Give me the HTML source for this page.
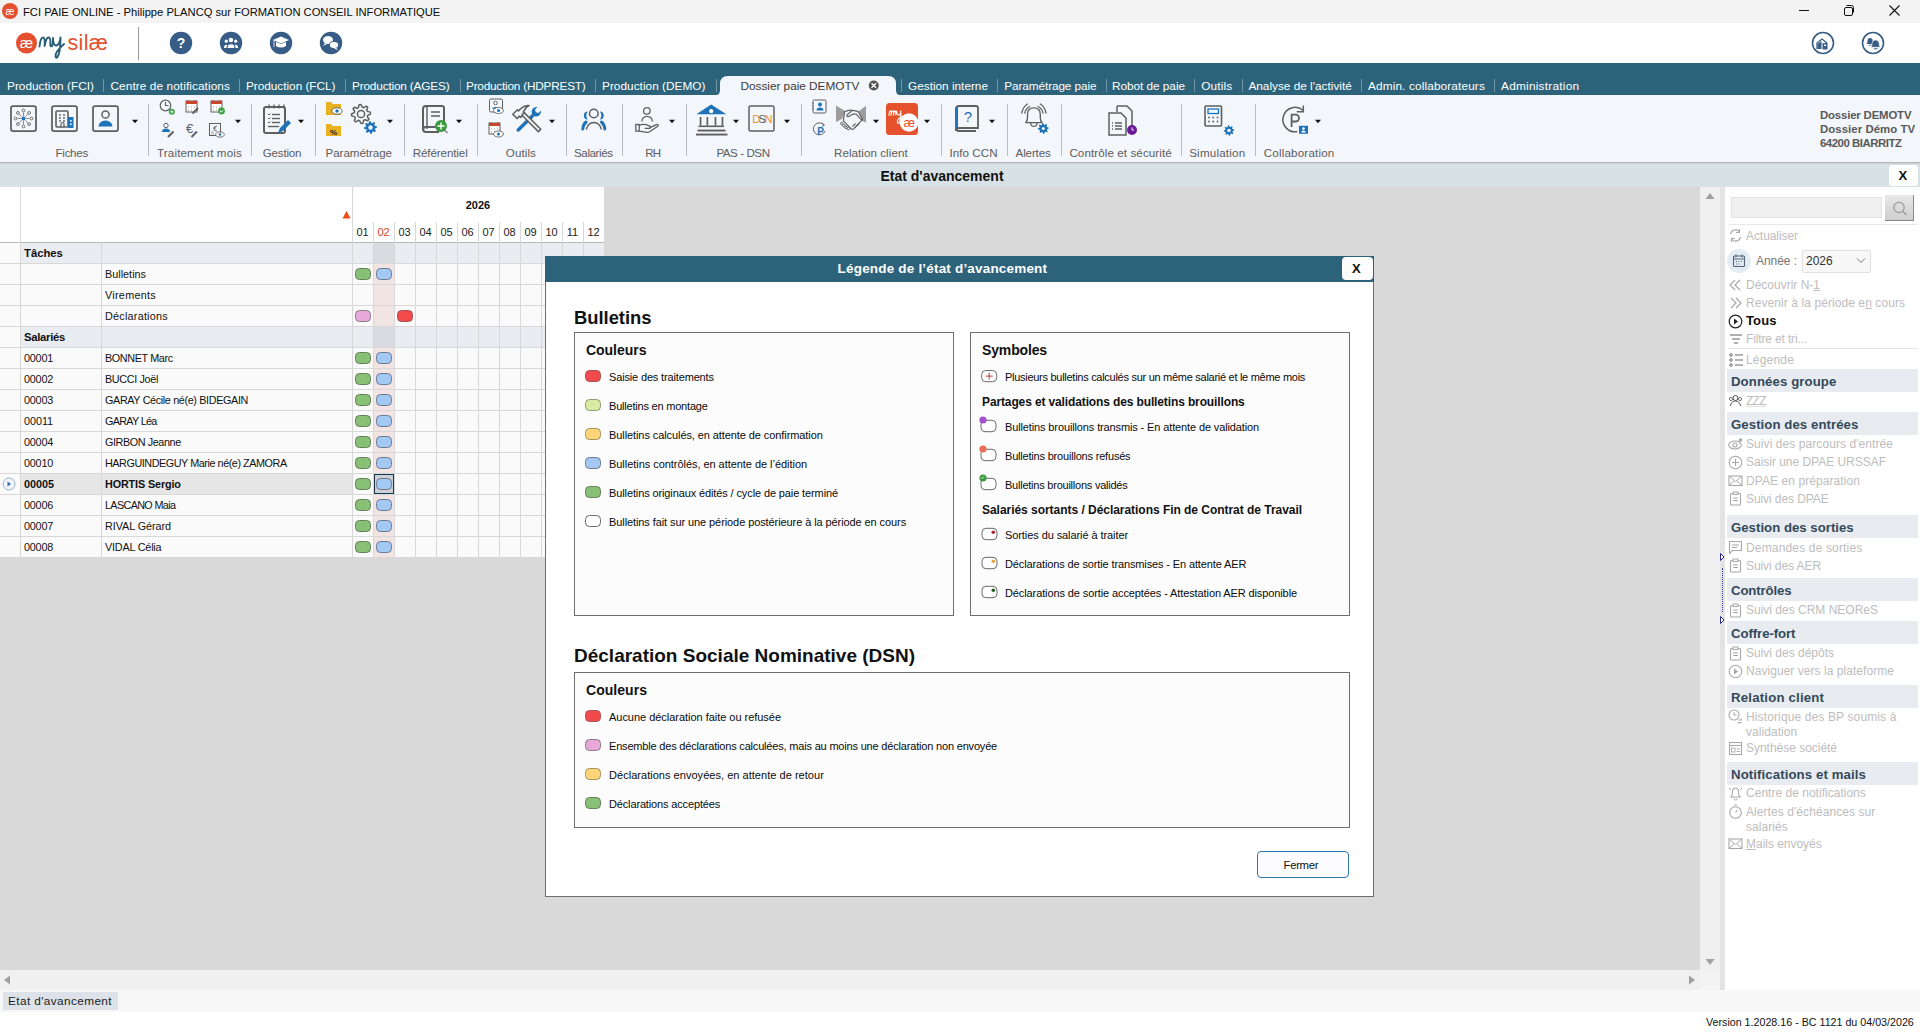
<!DOCTYPE html><html><head><meta charset="utf-8"><title>FCI PAIE ONLINE</title><style>
*{margin:0;padding:0;box-sizing:border-box}
html,body{width:1920px;height:1032px;overflow:hidden;background:#fff;font-family:"Liberation Sans",sans-serif}
.t{position:absolute;white-space:nowrap}
.r{position:absolute}
svg{position:absolute;overflow:visible}
</style></head><body>
<div class="r" style="left:0px;top:0px;width:1920px;height:23px;background:#f3f3f3"></div>
<svg style="left:0;top:0" width="24" height="23"><circle cx="10" cy="11" r="8" fill="#e4502d"/><text x="10" y="14.5" font-size="10" fill="#fff" text-anchor="middle" font-family="Liberation Sans">æ</text></svg>
<div class="t " style="left:23px;top:3.5px;height:16px;line-height:16px;font-size:11.2px;color:#0a0a0a;">FCI PAIE ONLINE - Philippe PLANCQ sur FORMATION CONSEIL INFORMATIQUE</div>
<svg style="left:1790px;top:0" width="130" height="23"><line x1="9" y1="10.5" x2="19" y2="10.5" stroke="#111" stroke-width="1"/><rect x="54.5" y="7.5" width="8" height="8" rx="1.5" fill="none" stroke="#111" stroke-width="1"/><path d="M56.5 5.5 h5 a2 2 0 0 1 2 2 v5" fill="none" stroke="#111" stroke-width="1"/><path d="M99.5 5.5 l10 10 M109.5 5.5 l-10 10" stroke="#111" stroke-width="1.1"/></svg>
<svg style="left:0;top:23px" width="140" height="40"><circle cx="26.5" cy="20" r="10.5" fill="#e4502d"/><text x="26.5" y="25" font-size="15" fill="#fff" text-anchor="middle" font-family="Liberation Sans">æ</text><path d="M39.5 23.5 Q40.5 14 43.2 14.5 Q45.2 15 44.6 23 Q46.2 14 48.8 14.5 Q50.8 15 50.3 22 Q50.5 24 52 23 Q53 21 53 15 Q53 23 56.5 22.5 Q59.5 22 60.5 14.5 Q60.5 27 58.5 32 Q56.5 36.5 55.5 33.5 Q55 29 64 21" fill="none" stroke="#2b5d74" stroke-width="1.9" stroke-linecap="round" stroke-linejoin="round"/><text x="67.5" y="26.5" font-size="21.5" fill="#e4502d" font-family="Liberation Sans" letter-spacing="0.3">silæ</text></svg>
<div class="r" style="left:138px;top:27px;width:1px;height:33px;background:#9a9a9a"></div>
<svg style="left:160px;top:23px" width="190" height="40"><circle cx="21" cy="20" r="11.2" fill="#375d86"/><circle cx="71" cy="20" r="11.2" fill="#375d86"/><circle cx="121" cy="20" r="11.2" fill="#375d86"/><circle cx="171" cy="20" r="11.2" fill="#375d86"/><text x="21" y="25" font-size="14" font-weight="bold" fill="#fff" text-anchor="middle" font-family="Liberation Sans">?</text><g fill="#fff"><circle cx="71" cy="17" r="2.2"/><circle cx="66.3" cy="18.2" r="1.6"/><circle cx="75.7" cy="18.2" r="1.6"/><path d="M67.6 25 v-0.5 a3.4 3.2 0 0 1 6.8 0 v0.5z"/><path d="M64 25 v-1 a2.5 2.3 0 0 1 3.3-2.1 q-0.9 1.2-0.9 3.1z M78 25 v-1 a2.5 2.3 0 0 0 -3.3-2.1 q0.9 1.2 0.9 3.1z"/></g><g fill="#fff"><path d="M113 17 l8-3.5 l8 3.5 l-8 3.5z"/><path d="M116 19 v4 q5 3 10 0 v-4 l-5 2z"/><rect x="113.5" y="17" width="1" height="7" opacity=".8"/></g><g fill="#fff"><ellipse cx="168" cy="17" rx="5" ry="4"/><path d="M165 20 l-2 3 l4-2z"/><ellipse cx="174" cy="22" rx="4.5" ry="3.5" fill="#fff" stroke="#375d86" stroke-width="1"/><path d="M176 24.5 l2 2.5 l-4-1.5z"/></g></svg>
<svg style="left:1800px;top:23px" width="100" height="40"><circle cx="23" cy="20" r="10.5" fill="none" stroke="#375d86" stroke-width="1.6"/><path d="M17 26 v-6 l5-4 l5 4" fill="none" stroke="#375d86" stroke-width="1.3"/><path d="M17.5 21 l4-3 v8 h-4z" fill="#375d86"/><rect x="22.5" y="20" width="5" height="6.5" fill="#375d86"/><rect x="24" y="21.5" width="2" height="1.5" fill="#fff"/><circle cx="73" cy="20" r="10.5" fill="none" stroke="#375d86" stroke-width="1.6"/><path d="M66.5 21 q1-0.6 1-3 q0-3 2.6-3 q2.6 0 2.6 3 q0 2.4 1 3z" fill="#375d86"/><path d="M68.5 22.2 h3" stroke="#375d86" stroke-width="0.8"/><path d="M70.8 24.3 q1.2-0.8 1.2-3.5 q0-3.8 3.6-3.8 q3.6 0 3.6 3.8 q0 2.7 1.2 3.5z" fill="#375d86" stroke="#fff" stroke-width="0.6"/><path d="M73.8 25.8 h3.8" stroke="#375d86" stroke-width="1"/></svg>
<div class="r" style="left:0px;top:63px;width:1920px;height:32px;background:#2d637a"></div>
<svg style="left:716px;top:63px" width="184" height="32"><path d="M0 32 q4 0 4-5 v-6 q0-8 8-8 h160 q8 0 8 8 v6 q0 5 4 5z" fill="#f3f6fb"/></svg>
<div class="t " style="left:7px;top:77.5px;height:16px;line-height:16px;font-size:11.8px;color:#ffffff;letter-spacing:0.028px;">Production (FCI)</div>
<div class="t " style="left:110.5px;top:77.5px;height:16px;line-height:16px;font-size:11.8px;color:#ffffff;letter-spacing:0.091px;">Centre de notifications</div>
<div class="t " style="left:246px;top:77.5px;height:16px;line-height:16px;font-size:11.8px;color:#ffffff;letter-spacing:-0.021px;">Production (FCL)</div>
<div class="t " style="left:352px;top:77.5px;height:16px;line-height:16px;font-size:11.8px;color:#ffffff;letter-spacing:-0.167px;">Production (AGES)</div>
<div class="t " style="left:466px;top:77.5px;height:16px;line-height:16px;font-size:11.8px;color:#ffffff;letter-spacing:-0.222px;">Production (HDPREST)</div>
<div class="t " style="left:602px;top:77.5px;height:16px;line-height:16px;font-size:11.8px;color:#ffffff;letter-spacing:0.033px;">Production (DEMO)</div>
<div class="t " style="left:740.5px;top:77.5px;height:16px;line-height:16px;font-size:11.8px;color:#3a3a3a;letter-spacing:-0.018px;">Dossier paie DEMOTV</div>
<div class="t " style="left:908px;top:77.5px;height:16px;line-height:16px;font-size:11.8px;color:#ffffff;letter-spacing:-0.001px;">Gestion interne</div>
<div class="t " style="left:1004.3px;top:77.5px;height:16px;line-height:16px;font-size:11.8px;color:#ffffff;letter-spacing:-0.106px;">Paramétrage paie</div>
<div class="t " style="left:1112px;top:77.5px;height:16px;line-height:16px;font-size:11.8px;color:#ffffff;letter-spacing:-0.036px;">Robot de paie</div>
<div class="t " style="left:1201.3px;top:77.5px;height:16px;line-height:16px;font-size:11.8px;color:#ffffff;letter-spacing:0.123px;">Outils</div>
<div class="t " style="left:1248.4px;top:77.5px;height:16px;line-height:16px;font-size:11.8px;color:#ffffff;letter-spacing:0.007px;">Analyse de l'activité</div>
<div class="t " style="left:1368px;top:77.5px;height:16px;line-height:16px;font-size:11.8px;color:#ffffff;letter-spacing:0.137px;">Admin. collaborateurs</div>
<div class="t " style="left:1501px;top:77.5px;height:16px;line-height:16px;font-size:11.8px;color:#ffffff;letter-spacing:0.260px;">Administration</div>
<div class="r" style="left:103px;top:79px;width:1px;height:13px;background:#6d95a6"></div>
<div class="r" style="left:239px;top:79px;width:1px;height:13px;background:#6d95a6"></div>
<div class="r" style="left:345px;top:79px;width:1px;height:13px;background:#6d95a6"></div>
<div class="r" style="left:459.5px;top:79px;width:1px;height:13px;background:#6d95a6"></div>
<div class="r" style="left:595px;top:79px;width:1px;height:13px;background:#6d95a6"></div>
<div class="r" style="left:715.5px;top:79px;width:1px;height:13px;background:#6d95a6"></div>
<div class="r" style="left:901px;top:79px;width:1px;height:13px;background:#6d95a6"></div>
<div class="r" style="left:997.4px;top:79px;width:1px;height:13px;background:#6d95a6"></div>
<div class="r" style="left:1105.7px;top:79px;width:1px;height:13px;background:#6d95a6"></div>
<div class="r" style="left:1194.4px;top:79px;width:1px;height:13px;background:#6d95a6"></div>
<div class="r" style="left:1241.5px;top:79px;width:1px;height:13px;background:#6d95a6"></div>
<div class="r" style="left:1361px;top:79px;width:1px;height:13px;background:#6d95a6"></div>
<div class="r" style="left:1494px;top:79px;width:1px;height:13px;background:#6d95a6"></div>
<svg style="left:866px;top:78px" width="16" height="16"><circle cx="7.75" cy="7.5" r="5" fill="#555"/><path d="M5.5 5.25 l4.5 4.5 M10 5.25 l-4.5 4.5" stroke="#fff" stroke-width="1.3"/></svg>
<div class="r" style="left:0px;top:95px;width:1920px;height:68px;background:#f3f6fb"></div>
<div class="r" style="left:0px;top:162px;width:1920px;height:1px;background:#b4b8bc"></div>
<div class="r" style="left:0px;top:163px;width:1920px;height:2px;background:linear-gradient(#c8ced3,#d8e1e6)"></div>
<div class="t " style="left:55.6px;top:144.5px;height:16px;line-height:16px;font-size:11.6px;color:#5c5c5c;letter-spacing:-0.311px;">Fiches</div>
<div class="t " style="left:157px;top:144.5px;height:16px;line-height:16px;font-size:11.6px;color:#5c5c5c;letter-spacing:0.152px;">Traitement mois</div>
<div class="t " style="left:262.8px;top:144.5px;height:16px;line-height:16px;font-size:11.6px;color:#5c5c5c;letter-spacing:-0.211px;">Gestion</div>
<div class="t " style="left:325.5px;top:144.5px;height:16px;line-height:16px;font-size:11.6px;color:#5c5c5c;letter-spacing:-0.050px;">Paramétrage</div>
<div class="t " style="left:412.7px;top:144.5px;height:16px;line-height:16px;font-size:11.6px;color:#5c5c5c;letter-spacing:-0.099px;">Référentiel</div>
<div class="t " style="left:505.8px;top:144.5px;height:16px;line-height:16px;font-size:11.6px;color:#5c5c5c;letter-spacing:0.092px;">Outils</div>
<div class="t " style="left:574px;top:144.5px;height:16px;line-height:16px;font-size:11.6px;color:#5c5c5c;letter-spacing:-0.401px;">Salariés</div>
<div class="t " style="left:645.2px;top:144.5px;height:16px;line-height:16px;font-size:11.6px;color:#5c5c5c;letter-spacing:-0.827px;">RH</div>
<div class="t " style="left:716.4px;top:144.5px;height:16px;line-height:16px;font-size:11.6px;color:#5c5c5c;letter-spacing:-0.439px;">PAS - DSN</div>
<div class="t " style="left:834px;top:144.5px;height:16px;line-height:16px;font-size:11.6px;color:#5c5c5c;letter-spacing:0.056px;">Relation client</div>
<div class="t " style="left:949.4px;top:144.5px;height:16px;line-height:16px;font-size:11.6px;color:#5c5c5c;letter-spacing:0.081px;">Info CCN</div>
<div class="t " style="left:1015.6px;top:144.5px;height:16px;line-height:16px;font-size:11.6px;color:#5c5c5c;letter-spacing:-0.157px;">Alertes</div>
<div class="t " style="left:1069.4px;top:144.5px;height:16px;line-height:16px;font-size:11.6px;color:#5c5c5c;letter-spacing:0.096px;">Contrôle et sécurité</div>
<div class="t " style="left:1189.2px;top:144.5px;height:16px;line-height:16px;font-size:11.6px;color:#5c5c5c;letter-spacing:0.204px;">Simulation</div>
<div class="t " style="left:1263.7px;top:144.5px;height:16px;line-height:16px;font-size:11.6px;color:#5c5c5c;letter-spacing:0.189px;">Collaboration</div>
<div class="r" style="left:148px;top:104px;width:1px;height:52px;background:#b9bcc0"></div>
<div class="r" style="left:251px;top:104px;width:1px;height:52px;background:#b9bcc0"></div>
<div class="r" style="left:315px;top:104px;width:1px;height:52px;background:#b9bcc0"></div>
<div class="r" style="left:404px;top:104px;width:1px;height:52px;background:#b9bcc0"></div>
<div class="r" style="left:477px;top:104px;width:1px;height:52px;background:#b9bcc0"></div>
<div class="r" style="left:566px;top:104px;width:1px;height:52px;background:#b9bcc0"></div>
<div class="r" style="left:622px;top:104px;width:1px;height:52px;background:#b9bcc0"></div>
<div class="r" style="left:686px;top:104px;width:1px;height:52px;background:#b9bcc0"></div>
<div class="r" style="left:801px;top:104px;width:1px;height:52px;background:#b9bcc0"></div>
<div class="r" style="left:941px;top:104px;width:1px;height:52px;background:#b9bcc0"></div>
<div class="r" style="left:1007px;top:104px;width:1px;height:52px;background:#b9bcc0"></div>
<div class="r" style="left:1061px;top:104px;width:1px;height:52px;background:#b9bcc0"></div>
<div class="r" style="left:1181px;top:104px;width:1px;height:52px;background:#b9bcc0"></div>
<div class="r" style="left:1255px;top:104px;width:1px;height:52px;background:#b9bcc0"></div>
<svg style="left:130.8px;top:119px" width="8" height="5" viewBox="0 0 8 5"><path d="M1 0.8 h6 l-3 3.4z" fill="#111"/></svg>
<svg style="left:234px;top:119px" width="8" height="5" viewBox="0 0 8 5"><path d="M1 0.8 h6 l-3 3.4z" fill="#111"/></svg>
<svg style="left:296.9px;top:119px" width="8" height="5" viewBox="0 0 8 5"><path d="M1 0.8 h6 l-3 3.4z" fill="#111"/></svg>
<svg style="left:386px;top:119px" width="8" height="5" viewBox="0 0 8 5"><path d="M1 0.8 h6 l-3 3.4z" fill="#111"/></svg>
<svg style="left:455.2px;top:119px" width="8" height="5" viewBox="0 0 8 5"><path d="M1 0.8 h6 l-3 3.4z" fill="#111"/></svg>
<svg style="left:547.7px;top:119px" width="8" height="5" viewBox="0 0 8 5"><path d="M1 0.8 h6 l-3 3.4z" fill="#111"/></svg>
<svg style="left:667.5px;top:119px" width="8" height="5" viewBox="0 0 8 5"><path d="M1 0.8 h6 l-3 3.4z" fill="#111"/></svg>
<svg style="left:731.8px;top:119px" width="8" height="5" viewBox="0 0 8 5"><path d="M1 0.8 h6 l-3 3.4z" fill="#111"/></svg>
<svg style="left:782.8px;top:119px" width="8" height="5" viewBox="0 0 8 5"><path d="M1 0.8 h6 l-3 3.4z" fill="#111"/></svg>
<svg style="left:872px;top:119px" width="8" height="5" viewBox="0 0 8 5"><path d="M1 0.8 h6 l-3 3.4z" fill="#111"/></svg>
<svg style="left:922.7px;top:119px" width="8" height="5" viewBox="0 0 8 5"><path d="M1 0.8 h6 l-3 3.4z" fill="#111"/></svg>
<svg style="left:987.9px;top:119px" width="8" height="5" viewBox="0 0 8 5"><path d="M1 0.8 h6 l-3 3.4z" fill="#111"/></svg>
<svg style="left:1313.9px;top:119px" width="8" height="5" viewBox="0 0 8 5"><path d="M1 0.8 h6 l-3 3.4z" fill="#111"/></svg>
<svg style="left:10px;top:105px" width="28" height="28" viewBox="0 0 28 28"><rect x="1" y="1" width="25" height="25" rx="2" fill="none" stroke="#5f5f5f" stroke-width="1.75"/><circle cx="13.5" cy="13.5" r="2" fill="#1e73b8"/><circle cx="13.5" cy="5.5" r="1.4" fill="none" stroke="#5f5f5f" stroke-width="0.9"/><line x1="13.5" y1="11.1" x2="13.5" y2="7.5" stroke="#5f5f5f" stroke-width="0.7"/><circle cx="13.5" cy="21.5" r="1.4" fill="none" stroke="#5f5f5f" stroke-width="0.9"/><line x1="13.5" y1="15.9" x2="13.5" y2="19.5" stroke="#5f5f5f" stroke-width="0.7"/><circle cx="5.5" cy="13.5" r="1.4" fill="none" stroke="#5f5f5f" stroke-width="0.9"/><line x1="11.1" y1="13.5" x2="7.5" y2="13.5" stroke="#5f5f5f" stroke-width="0.7"/><circle cx="21.5" cy="13.5" r="1.4" fill="none" stroke="#5f5f5f" stroke-width="0.9"/><line x1="15.9" y1="13.5" x2="19.5" y2="13.5" stroke="#5f5f5f" stroke-width="0.7"/><circle cx="7.9" cy="7.9" r="1.4" fill="none" stroke="#5f5f5f" stroke-width="0.9"/><line x1="11.82" y1="11.82" x2="9.3" y2="9.3" stroke="#5f5f5f" stroke-width="0.7"/><circle cx="19.1" cy="7.9" r="1.4" fill="none" stroke="#5f5f5f" stroke-width="0.9"/><line x1="15.18" y1="11.82" x2="17.7" y2="9.3" stroke="#5f5f5f" stroke-width="0.7"/><circle cx="7.9" cy="19.1" r="1.4" fill="none" stroke="#5f5f5f" stroke-width="0.9"/><line x1="11.82" y1="15.18" x2="9.3" y2="17.7" stroke="#5f5f5f" stroke-width="0.7"/><circle cx="19.1" cy="19.1" r="1.4" fill="none" stroke="#5f5f5f" stroke-width="0.9"/><line x1="15.18" y1="15.18" x2="17.7" y2="17.7" stroke="#5f5f5f" stroke-width="0.7"/></svg>
<svg style="left:51px;top:105px" width="28" height="28" viewBox="0 0 28 28"><rect x="1" y="1" width="25" height="25" rx="2" fill="none" stroke="#5f5f5f" stroke-width="1.75"/><rect x="5" y="6" width="12" height="16" rx="1" fill="none" stroke="#5f5f5f" stroke-width="1.6"/><circle cx="9" cy="10" r="0.9" fill="#5f5f5f"/><circle cx="9" cy="13" r="0.9" fill="#5f5f5f"/><circle cx="9" cy="16" r="0.9" fill="#5f5f5f"/><circle cx="13" cy="10" r="0.9" fill="#5f5f5f"/><circle cx="13" cy="13" r="0.9" fill="#5f5f5f"/><circle cx="13" cy="16" r="0.9" fill="#5f5f5f"/><path d="M10 22 v-3 a1.5 1.5 0 0 1 3 0 v3" fill="none" stroke="#5f5f5f" stroke-width="1.2"/><rect x="17" y="12" width="5.5" height="11" fill="#1e73b8"/><rect x="19" y="15" width="1.6" height="1.6" fill="#fff"/><rect x="19" y="18.5" width="1.6" height="1.6" fill="#fff"/></svg>
<svg style="left:92px;top:105px" width="28" height="28" viewBox="0 0 28 28"><rect x="1" y="1" width="25" height="25" rx="2" fill="none" stroke="#5f5f5f" stroke-width="1.75"/><circle cx="13.5" cy="9.5" r="3.6" fill="none" stroke="#5f5f5f" stroke-width="1.5"/><path d="M6.5 21.5 a7 6 0 0 1 14 0z" fill="#1e73b8"/></svg>
<svg style="left:159px;top:99px" width="18" height="18" viewBox="0 0 18 18"><circle cx="6.5" cy="6.5" r="5.3" fill="none" stroke="#5f5f5f" stroke-width="1.2"/><path d="M6.5 3 v3.5 h3" fill="none" stroke="#5f5f5f" stroke-width="1.1"/><circle cx="12.8" cy="12.8" r="3" fill="#3aa346"/><path d="M11.3 12.8 h3 M12.8 11.3 v3" stroke="#fff" stroke-width="0.9"/></svg>
<svg style="left:185px;top:99px" width="16" height="17" viewBox="0 0 16 17"><rect x="1" y="2" width="11" height="11" fill="#fff" stroke="#5f5f5f" stroke-width="1"/><rect x="1" y="2" width="11" height="3" fill="#c8462e"/><path d="M3 1 v2 M10 1 v2" stroke="#c8462e" stroke-width="1"/><path d="M3 8 h1 M6 8 h1 M9 8 h1 M3 11 h1 M6 11 h1" stroke="#999" stroke-width="1"/><path d="M7.5 14.5 l5.5-5.5" stroke="#5f5f5f" stroke-width="2"/></svg>
<svg style="left:210px;top:99px" width="16" height="17" viewBox="0 0 16 17"><rect x="1" y="2" width="11" height="11" fill="#fff" stroke="#5f5f5f" stroke-width="1"/><rect x="1" y="2" width="11" height="3" fill="#c8462e"/><path d="M3 1 v2 M10 1 v2" stroke="#c8462e" stroke-width="1"/><path d="M3 8 h1 M6 8 h1 M9 8 h1 M3 11 h1 M6 11 h1" stroke="#999" stroke-width="1"/><circle cx="11.5" cy="12" r="3.4" fill="#3aa346"/><path d="M9.8 12 l1.2 1.2 l2.2-2.2" fill="none" stroke="#fff" stroke-width="1"/></svg>
<svg style="left:160px;top:122px" width="16" height="17" viewBox="0 0 16 17"><circle cx="6" cy="3.5" r="2.2" fill="none" stroke="#5f5f5f" stroke-width="1"/><path d="M2 10 a4 3.5 0 0 1 8 0z" fill="#1e73b8"/><path d="M8 15 l5.5-5.5" stroke="#5f5f5f" stroke-width="2"/></svg>
<svg style="left:184px;top:122px" width="16" height="17" viewBox="0 0 16 17"><text x="5.5" y="11" font-size="13" fill="#5f5f5f" text-anchor="middle" font-family="Liberation Sans">€</text><path d="M7.5 15 l5.5-5.5" stroke="#5f5f5f" stroke-width="2"/></svg>
<svg style="left:208px;top:122px" width="18" height="17" viewBox="0 0 18 17"><rect x="1.5" y="1.5" width="11" height="12" fill="none" stroke="#5f5f5f" stroke-width="1"/><path d="M9 4 q-3 0-3 2.5 q0 2.5 3 2.5 M5 6 h3" fill="none" stroke="#5f5f5f" stroke-width="0.9"/><path d="M3 10 h3 M3 12 h3" stroke="#999" stroke-width="0.8"/><ellipse cx="12" cy="12.5" rx="4.2" ry="2.6" fill="#fff" stroke="#5f5f5f" stroke-width="0.9"/><circle cx="12" cy="12.5" r="1.3" fill="#1e73b8"/></svg>
<svg style="left:263px;top:104px" width="30" height="31" viewBox="0 0 30 31"><rect x="1" y="3" width="21" height="26" rx="2" fill="none" stroke="#5f5f5f" stroke-width="2"/><path d="M6 0.5 v4" stroke="#5f5f5f" stroke-width="1.3"/><path d="M11 0.5 v4" stroke="#5f5f5f" stroke-width="1.3"/><path d="M16 0.5 v4" stroke="#5f5f5f" stroke-width="1.3"/><path d="M21 0.5 v4" stroke="#5f5f5f" stroke-width="1.3"/><path d="M5 10 l1 1 l1.5-1.5" fill="none" stroke="#5f5f5f" stroke-width="1"/><path d="M9 10.5 h8" stroke="#5f5f5f" stroke-width="1.4"/><path d="M5 14 l1 1 l1.5-1.5" fill="none" stroke="#5f5f5f" stroke-width="1"/><path d="M9 14.5 h8" stroke="#5f5f5f" stroke-width="1.4"/><path d="M5 18 l1 1 l1.5-1.5" fill="none" stroke="#5f5f5f" stroke-width="1"/><path d="M9 18.5 h8" stroke="#5f5f5f" stroke-width="1.4"/><path d="M5 22.5 h11" stroke="#5f5f5f" stroke-width="1.4"/><path d="M15 29 l2-5 l8-8 l3 3 l-8 8z" fill="#1e73b8"/></svg>
<svg style="left:326px;top:101px" width="17" height="15" viewBox="0 0 17 15"><path d="M0 1 h5 l1.5 2 h8.5 v11 h-15z" fill="#e9b020"/><ellipse cx="11" cy="10" rx="5.2" ry="3.3" fill="#fff" stroke="#5f5f5f" stroke-width="0.9"/><circle cx="11" cy="10" r="1.7" fill="#1e73b8"/></svg>
<svg style="left:326px;top:123px" width="17" height="14" viewBox="0 0 17 14"><path d="M0 1 h5 l1.5 2 h8.5 v10 h-15z" fill="#e9b020"/><text x="7.5" y="11.5" font-size="8" font-weight="bold" text-anchor="middle" fill="#222" font-family="Liberation Sans">%</text></svg>
<svg style="left:350px;top:103px" width="30" height="34" viewBox="0 0 30 34"><polygon points="20.31,9.11 20.50,10.97 17.71,12.31 17.33,13.59 18.92,16.25 17.74,17.69 14.82,16.67 13.64,17.31 12.89,20.31 11.03,20.50 9.69,17.71 8.41,17.33 5.75,18.92 4.31,17.74 5.33,14.82 4.69,13.64 1.69,12.89 1.50,11.03 4.29,9.69 4.67,8.41 3.08,5.75 4.26,4.31 7.18,5.33 8.36,4.69 9.11,1.69 10.97,1.50 12.31,4.29 13.59,4.67 16.25,3.08 17.69,4.26 16.67,7.18 17.31,8.36" fill="none" stroke="#5f5f5f" stroke-width="1.5" stroke-linejoin="round"/><circle cx="11" cy="11" r="3.6" fill="none" stroke="#5f5f5f" stroke-width="1.5"/><polygon points="26.87,23.21 27.00,24.48 25.09,25.40 24.83,26.28 25.92,28.09 25.11,29.08 23.11,28.38 22.31,28.82 21.79,30.87 20.52,31.00 19.60,29.09 18.72,28.83 16.91,29.92 15.92,29.11 16.62,27.11 16.18,26.31 14.13,25.79 14.00,24.52 15.91,23.60 16.17,22.72 15.08,20.91 15.89,19.92 17.89,20.62 18.69,20.18 19.21,18.13 20.48,18.00 21.40,19.91 22.28,20.17 24.09,19.08 25.08,19.89 24.38,21.89 24.82,22.69" fill="#1e73b8"/><circle cx="20.5" cy="24.5" r="2.2" fill="#f3f6fb"/></svg>
<svg style="left:421px;top:105px" width="28" height="29" viewBox="0 0 28 29"><path d="M2 4 q0-3 3-3 h16 a2 2 0 0 1 2 2 v19 h-18 q-3 0-3 3 z" fill="none" stroke="#5f5f5f" stroke-width="2"/><path d="M2 24 q0 3 3 3 h13" fill="none" stroke="#5f5f5f" stroke-width="2"/><path d="M6 2 v22" stroke="#5f5f5f" stroke-width="1.4"/><path d="M10 7 h9 M10 11 h9" stroke="#5f5f5f" stroke-width="1.4"/><circle cx="20" cy="21" r="6" fill="#3a9a3f"/><path d="M16.5 21 h7 M20 17.5 v7" stroke="#fff" stroke-width="1.4"/><path d="M24 25.5 l2.5 2.5" stroke="#777" stroke-width="1.2"/></svg>
<svg style="left:488px;top:98px" width="17" height="18" viewBox="0 0 17 18"><rect x="1.5" y="1" width="13" height="13" rx="1.5" fill="none" stroke="#5f5f5f" stroke-width="1"/><circle cx="7.5" cy="5" r="1.8" fill="none" stroke="#5f5f5f" stroke-width="0.9"/><path d="M4 11 a3.5 3 0 0 1 6 -1" fill="#1e73b8"/><ellipse cx="10.5" cy="12.5" rx="5" ry="3" fill="#fff" stroke="#5f5f5f" stroke-width="0.9"/><circle cx="10.5" cy="12.5" r="1.5" fill="#1e73b8"/></svg>
<svg style="left:488px;top:121px" width="17" height="18" viewBox="0 0 17 18"><rect x="1" y="2" width="11" height="11" fill="#fff" stroke="#5f5f5f" stroke-width="1"/><rect x="1" y="2" width="11" height="3" fill="#c8462e"/><path d="M3 1 v2 M10 1 v2" stroke="#c8462e" stroke-width="1"/><path d="M3 8 h1 M6 8 h1 M9 8 h1 M3 11 h1 M6 11 h1" stroke="#999" stroke-width="1"/><ellipse cx="10.5" cy="13" rx="5" ry="3" fill="#fff" stroke="#5f5f5f" stroke-width="0.9"/><circle cx="10.5" cy="13" r="1.5" fill="#1e73b8"/></svg>
<svg style="left:512px;top:104px" width="30" height="29" viewBox="0 0 30 29"><path d="M6.2 26 L20 12.5" stroke="#1e73b8" stroke-width="3.4" stroke-linecap="round"/><path d="M19 14 l-1.5-1.5 l2.5-2.5 a5 5 0 0 1 5.5-7 l-2.5 2.5 l0.8 2.7 l2.7 0.8 l2.5-2.5 a5 5 0 0 1 -7 5.5z" fill="#1e73b8"/><path d="M0.8 10.3 L5.5 5.8 L6.6 6.9 L9.2 4.3 Q13 1 17 1.6 Q13 3.6 12.2 6.8 L11.2 8 L12.6 9.4 L8.6 13.4 L7.2 12 L5.3 14.6 Z" fill="#f3f6fb" stroke="#5f5f5f" stroke-width="1.5" stroke-linejoin="round"/><path d="M9.8 11 L12.2 8.6 L28.8 25.2 L26.4 27.6 Z" fill="#f3f6fb" stroke="#5f5f5f" stroke-width="1.5" stroke-linejoin="round"/></svg>
<svg style="left:581px;top:107px" width="27" height="24" viewBox="0 0 27 24"><circle cx="12.8" cy="6.5" r="4.3" fill="none" stroke="#5f5f5f" stroke-width="1.5"/><path d="M5.4 22.5 A7.5 8 0 0 1 20.3 22.5" fill="none" stroke="#5f5f5f" stroke-width="1.5"/><path d="M6.8 4.6 a3.9 3.9 0 0 0 0 7.8 a5.8 5.8 0 0 1 0 -7.8z M18.8 4.6 a3.9 3.9 0 0 1 0 7.8 a5.8 5.8 0 0 0 0 -7.8z" fill="#1e73b8"/><path d="M1.8 22 q0.3-4.5 3.3-7 M23.8 22 q-0.3-4.5 -3.3-7" fill="none" stroke="#1e73b8" stroke-width="3" stroke-linecap="round"/></svg>
<svg style="left:635px;top:107px" width="25" height="27" viewBox="0 0 25 27"><circle cx="11.9" cy="3.9" r="3.3" fill="none" stroke="#5f5f5f" stroke-width="1.3"/><path d="M6.8 14.5 a5.3 5.2 0 0 1 10.6 0" fill="none" stroke="#5f5f5f" stroke-width="1.3"/><rect x="0.8" y="17.5" width="3.4" height="6.6" fill="none" stroke="#5f5f5f" stroke-width="1.3"/><path d="M4.2 18.3 q3.5-1.6 7-0.6 l4 1.6 q1.4 1-0.4 2 h-4.6 M15 20.6 l6.4-3 q2.1-0.6 1.7 1.4 l-8.8 6 q-1 0.6 -2.2 0.3 l-7.9-1.2" fill="none" stroke="#5f5f5f" stroke-width="1.3" stroke-linejoin="round" stroke-linecap="round"/></svg>
<svg style="left:695.5px;top:103.5px" width="33" height="33" viewBox="0 0 33 33"><path d="M0.4 10.2 L15.2 0.5 L30.3 10.2z" fill="#1e73b8"/><circle cx="15.2" cy="7.2" r="2.1" fill="#fff"/><rect x="3.7" y="13" width="1.7" height="8.6" fill="#5f5f5f"/><rect x="10.5" y="13" width="1.7" height="8.6" fill="#5f5f5f"/><rect x="18.599999999999998" y="13" width="1.7" height="8.6" fill="#5f5f5f"/><rect x="25.599999999999998" y="13" width="1.7" height="8.6" fill="#5f5f5f"/><rect x="2.5" y="21.5" width="25.5" height="1.6" fill="#5f5f5f"/><rect x="1.5" y="25.6" width="28" height="1.9" fill="#5f5f5f"/><rect x="0" y="29.6" width="31.5" height="1.9" fill="#5f5f5f"/></svg>
<svg style="left:748px;top:105px" width="28" height="28" viewBox="0 0 28 28"><rect x="1" y="1" width="25" height="25" rx="1.5" fill="none" stroke="#5f5f5f" stroke-width="1.5"/><text x="13.5" y="17.5" font-size="11" text-anchor="middle" font-family="Liberation Sans" letter-spacing="-1.5"><tspan fill="#e8932e">D</tspan><tspan fill="#555">S</tspan><tspan fill="#e8932e">N</tspan></text></svg>
<svg style="left:811px;top:99px" width="17" height="16" viewBox="0 0 17 16"><rect x="2" y="1" width="13" height="13" rx="1.2" fill="none" stroke="#5f5f5f" stroke-width="1"/><path d="M1 4 h2 M1 7 h2 M1 10 h2" stroke="#5f5f5f" stroke-width="0.8"/><circle cx="9" cy="5.5" r="2" fill="#1e73b8"/><path d="M5.5 11.5 a3.5 3 0 0 1 7 0z" fill="#1e73b8"/></svg>
<svg style="left:812px;top:122px" width="15" height="16" viewBox="0 0 15 16"><path d="M12 3 a6 6 0 1 0 1 6" fill="none" stroke="#5f5f5f" stroke-width="1"/><path d="M10 1 l2.5 2 l-2.5 1.5" fill="none" stroke="#5f5f5f" stroke-width="0.9"/><text x="8.5" y="13" font-size="10" font-weight="bold" fill="#1e73b8" text-anchor="middle" font-family="Liberation Sans">P</text></svg>
<svg style="left:836px;top:105px" width="31" height="29" viewBox="0 0 31 29"><path d="M0 0.5 L9 6 L6 14 L0 17z M30 0.8 L22.5 6.5 L26 16 L30 17.4z" fill="#9d9d9d"/><path d="M8.5 6.8 q4-2 8-1.5 l5.5 1 l4.5 8 l-8.5 9.3 q-1.6 1.4 -3 0 l-7.6-7.8 z" fill="#f3f6fb" stroke="#5f5f5f" stroke-width="1.2" stroke-linejoin="round"/><path d="M16 5.6 l-5 4.4 q-0.8 1.6 1.2 1.8 l4.5-2.6 h3.5 l5.5 6" fill="none" stroke="#5f5f5f" stroke-width="1.2" stroke-linejoin="round"/><circle cx="5.8" cy="18.6" r="1.25" fill="#f3f6fb" stroke="#5f5f5f" stroke-width="1"/><circle cx="7.8" cy="20.6" r="1.25" fill="#f3f6fb" stroke="#5f5f5f" stroke-width="1"/><circle cx="10" cy="22.3" r="1.25" fill="#f3f6fb" stroke="#5f5f5f" stroke-width="1"/><circle cx="12.4" cy="23.6" r="1.25" fill="#f3f6fb" stroke="#5f5f5f" stroke-width="1"/><path d="M16.5 21.5 l3-3 M18.8 22.6 l3-3 M21 20.8 l2.2-2.2" stroke="#5f5f5f" stroke-width="1.1"/></svg>
<svg style="left:886px;top:103px" width="32" height="32" viewBox="0 0 32 32"><defs><clipPath id="mc"><rect x="0" y="0" width="32" height="32" rx="3.5"/></clipPath></defs><g clip-path="url(#mc)"><rect x="0" y="0" width="32" height="32" fill="#e5512c"/><circle cx="23" cy="19.5" r="9.3" fill="#fff"/></g><path d="M3 12.5 q0.3-5 1.6-4.6 q0.8 0.3 0.5 4.3 q0.5-4.6 1.8-4.3 q0.9 0.3 0.5 4.3 q0.6-4.6 1.9-4.3 q0.8 0.4 0.5 4 M10.8 8 q-0.2 4 1.8 4 q2 0 2.2-4.3 q0.2 7 -1.2 11 q-1.6 3.5 -2.3 0.2 q0.3-3 4.5-6" fill="none" stroke="#fff" stroke-width="1.1" stroke-linecap="round" stroke-linejoin="round"/><text x="23.2" y="24" font-size="13" fill="#e5512c" text-anchor="middle" font-family="Liberation Sans">æ</text></svg>
<svg style="left:954px;top:105px" width="26" height="28" viewBox="0 0 26 28"><path d="M2 4 q0-3 3-3 h17 a2 2 0 0 1 2 2 v20 h-19 q-3 0-3 3z" fill="none" stroke="#5f5f5f" stroke-width="1.8"/><path d="M2 23 q0 3 3 3 h17" fill="none" stroke="#5f5f5f" stroke-width="1.8"/><rect x="1.5" y="2" width="2.5" height="21" fill="#1e73b8"/><text x="14" y="17" font-size="15" fill="#1e73b8" text-anchor="middle" font-family="Liberation Sans">?</text></svg>
<svg style="left:1020px;top:103px" width="30" height="31" viewBox="0 0 30 31"><path d="M1.8 10 q1-6 5.7-9 M4.8 10 q1-4.5 4.9-6.5 M26 10 q-1-6 -5.7-9 M23 10 q-1-4.5 -4.9-6.5" fill="none" stroke="#5f5f5f" stroke-width="1.3" stroke-linecap="round"/><path d="M5.8 19.6 q1.7-1.5 1.7-5 v-3.2 q0-6.5 6.4-6.5 q6.4 0 6.4 6.5 v3.2 q0 3.5 1.7 5 z" fill="none" stroke="#5f5f5f" stroke-width="1.4" stroke-linejoin="round"/><path d="M10.6 20 q0.5 3.4 3.3 3.4 q2.8 0 3.3-3.4" fill="none" stroke="#5f5f5f" stroke-width="1.3"/><polygon points="28.59,24.43 28.70,25.48 27.12,26.24 26.90,26.97 27.80,28.48 27.13,29.30 25.47,28.72 24.80,29.09 24.37,30.79 23.32,30.90 22.56,29.32 21.83,29.10 20.32,30.00 19.50,29.33 20.08,27.67 19.71,27.00 18.01,26.57 17.90,25.52 19.48,24.76 19.70,24.03 18.80,22.52 19.47,21.70 21.13,22.28 21.80,21.91 22.23,20.21 23.28,20.10 24.04,21.68 24.77,21.90 26.28,21.00 27.10,21.67 26.52,23.33 26.89,24.00" fill="#1e73b8"/><circle cx="23.3" cy="25.5" r="1.5" fill="#f3f6fb"/></svg>
<svg style="left:1108px;top:105px" width="30" height="31" viewBox="0 0 30 31"><path d="M9 1 h10 l5 5 v17 h-4" fill="none" stroke="#5f5f5f" stroke-width="1.5"/><path d="M9 1 v6" stroke="#5f5f5f" stroke-width="1.5"/><path d="M1 8 h12 l5 5 v17 h-17z" fill="#f3f6fb" stroke="#5f5f5f" stroke-width="1.5"/><path d="M4 18 h1 M7 18 h7 M4 21 h1 M7 21 h7 M4 24 h1 M7 24 h7" stroke="#5f5f5f" stroke-width="1.3"/><circle cx="24" cy="25" r="5" fill="#6a1b9a"/><path d="M24 22.5 v2.5 h2" fill="none" stroke="#fff" stroke-width="0.9"/></svg>
<svg style="left:1203.5px;top:104.5px" width="31" height="31" viewBox="0 0 31 31"><rect x="1" y="1" width="16.5" height="20" rx="1" fill="none" stroke="#5f5f5f" stroke-width="1.6"/><rect x="4" y="4" width="10.5" height="4.5" fill="none" stroke="#1e73b8" stroke-width="1.3"/><circle cx="5" cy="12.5" r="0.9" fill="#5f5f5f"/><circle cx="5" cy="16.5" r="0.9" fill="#5f5f5f"/><circle cx="9.2" cy="12.5" r="0.9" fill="#5f5f5f"/><circle cx="9.2" cy="16.5" r="0.9" fill="#5f5f5f"/><circle cx="13.5" cy="12.5" r="0.9" fill="#5f5f5f"/><circle cx="13.5" cy="16.5" r="0.9" fill="#5f5f5f"/><polygon points="30.10,24.47 30.20,25.48 28.67,26.22 28.46,26.92 29.33,28.37 28.69,29.16 27.09,28.61 26.45,28.95 26.03,30.60 25.02,30.70 24.28,29.17 23.58,28.96 22.13,29.83 21.34,29.19 21.89,27.59 21.55,26.95 19.90,26.53 19.80,25.52 21.33,24.78 21.54,24.08 20.67,22.63 21.31,21.84 22.91,22.39 23.55,22.05 23.97,20.40 24.98,20.30 25.72,21.83 26.42,22.04 27.87,21.17 28.66,21.81 28.11,23.41 28.45,24.05" fill="#1e73b8"/><circle cx="25" cy="25.5" r="1.8" fill="#f3f6fb"/></svg>
<svg style="left:1282px;top:105px" width="27" height="30" viewBox="0 0 27 30"><path d="M21 5.3 A12.2 12.2 0 1 0 15.3 26.6" fill="none" stroke="#5f5f5f" stroke-width="1.5"/><path d="M21.3 0.6 v6.2 h-6.6" fill="none" stroke="#5f5f5f" stroke-width="1.5"/><path d="M9.6 22 v-12.3 h4 a3.4 3.4 0 0 1 0 6.8 h-4" fill="none" stroke="#5f5f5f" stroke-width="1.8"/><rect x="17" y="20.8" width="9" height="8" fill="#1e73b8"/><circle cx="21.5" cy="23.6" r="1.3" fill="#fff"/><path d="M19.3 27.5 a2.2 1.9 0 0 1 4.4 0z" fill="#fff"/></svg>
<div class="t " style="left:1820px;top:108.0px;height:14px;line-height:14px;font-size:11.4px;font-weight:bold;color:#595959;letter-spacing:-0.168px;">Dossier DEMOTV</div>
<div class="t " style="left:1820px;top:122.0px;height:14px;line-height:14px;font-size:11.4px;font-weight:bold;color:#595959;letter-spacing:0.054px;">Dossier Démo TV</div>
<div class="t " style="left:1820px;top:136.0px;height:14px;line-height:14px;font-size:11.4px;font-weight:bold;color:#595959;letter-spacing:-0.468px;">64200 BIARRITZ</div>
<div class="r" style="left:0px;top:165px;width:1920px;height:22px;background:#d8e1e6"></div>
<div class="t " style="left:0px;top:166.5px;height:18px;line-height:18px;font-size:14px;font-weight:bold;color:#111;"><div style="width:1884px;text-align:center">Etat d'avancement</div></div>
<div class="r" style="left:1889px;top:165px;width:29px;height:21px;background:#fff;border-radius:3px"></div>
<div class="t " style="left:1898.5px;top:167.5px;height:16px;line-height:16px;font-size:13px;font-weight:bold;color:#111;">X</div>
<div class="r" style="left:0px;top:187px;width:1700px;height:783px;background:#d9d9d9"></div>
<div class="r" style="left:0px;top:187px;width:604px;height:55px;background:#fff"></div>
<div class="r" style="left:0px;top:242px;width:604px;height:315px;background:#fafafa"></div>
<div class="r" style="left:20px;top:242px;width:584px;height:21px;background:#e9edf1"></div>
<div class="r" style="left:20px;top:326px;width:584px;height:21px;background:#e9edf1"></div>
<div class="r" style="left:373px;top:242px;width:21px;height:21px;background:#d8dce0"></div>
<div class="r" style="left:373px;top:326px;width:21px;height:21px;background:#d8dce0"></div>
<div class="r" style="left:373px;top:263px;width:21px;height:63px;background:#f1e4e3"></div>
<div class="r" style="left:373px;top:347px;width:21px;height:210px;background:#f1e4e3"></div>
<div class="r" style="left:20px;top:473px;width:332px;height:21px;background:#e6e6e6"></div>
<div class="r" style="left:0px;top:242px;width:604px;height:1px;background:#b8b8b8"></div>
<div class="r" style="left:0px;top:263px;width:604px;height:1px;background:#d8d8d8"></div>
<div class="r" style="left:0px;top:284px;width:604px;height:1px;background:#d8d8d8"></div>
<div class="r" style="left:0px;top:305px;width:604px;height:1px;background:#d8d8d8"></div>
<div class="r" style="left:0px;top:326px;width:604px;height:1px;background:#d8d8d8"></div>
<div class="r" style="left:0px;top:347px;width:604px;height:1px;background:#d8d8d8"></div>
<div class="r" style="left:0px;top:368px;width:604px;height:1px;background:#d8d8d8"></div>
<div class="r" style="left:0px;top:389px;width:604px;height:1px;background:#d8d8d8"></div>
<div class="r" style="left:0px;top:410px;width:604px;height:1px;background:#d8d8d8"></div>
<div class="r" style="left:0px;top:431px;width:604px;height:1px;background:#d8d8d8"></div>
<div class="r" style="left:0px;top:452px;width:604px;height:1px;background:#d8d8d8"></div>
<div class="r" style="left:0px;top:473px;width:604px;height:1px;background:#d8d8d8"></div>
<div class="r" style="left:0px;top:494px;width:604px;height:1px;background:#d8d8d8"></div>
<div class="r" style="left:0px;top:515px;width:604px;height:1px;background:#d8d8d8"></div>
<div class="r" style="left:0px;top:536px;width:604px;height:1px;background:#d8d8d8"></div>
<div class="r" style="left:0px;top:557px;width:604px;height:1px;background:#d8d8d8"></div>
<div class="r" style="left:20px;top:187px;width:1px;height:370px;background:#d8d8d8"></div>
<div class="r" style="left:101px;top:242px;width:1px;height:315px;background:#d8d8d8"></div>
<div class="r" style="left:352px;top:187px;width:1px;height:370px;background:#d8d8d8"></div>
<div class="r" style="left:373px;top:222px;width:1px;height:335px;background:#d8d8d8"></div>
<div class="r" style="left:394px;top:222px;width:1px;height:335px;background:#d8d8d8"></div>
<div class="r" style="left:415px;top:222px;width:1px;height:335px;background:#d8d8d8"></div>
<div class="r" style="left:436px;top:222px;width:1px;height:335px;background:#d8d8d8"></div>
<div class="r" style="left:457px;top:222px;width:1px;height:335px;background:#d8d8d8"></div>
<div class="r" style="left:478px;top:222px;width:1px;height:335px;background:#d8d8d8"></div>
<div class="r" style="left:499px;top:222px;width:1px;height:335px;background:#d8d8d8"></div>
<div class="r" style="left:520px;top:222px;width:1px;height:335px;background:#d8d8d8"></div>
<div class="r" style="left:541px;top:222px;width:1px;height:335px;background:#d8d8d8"></div>
<div class="r" style="left:562px;top:222px;width:1px;height:335px;background:#d8d8d8"></div>
<div class="r" style="left:583px;top:222px;width:1px;height:335px;background:#d8d8d8"></div>
<div class="r" style="left:604px;top:187px;width:1px;height:370px;background:#d8d8d8"></div>
<div class="t " style="left:352px;top:198.0px;height:14px;line-height:14px;font-size:11px;font-weight:bold;color:#111;"><div style="width:252px;text-align:center">2026</div></div>
<div class="t " style="left:352px;top:225.0px;height:14px;line-height:14px;font-size:11px;color:#222;"><div style="width:21px;text-align:center">01</div></div>
<div class="t " style="left:373px;top:225.0px;height:14px;line-height:14px;font-size:11px;color:#d9441c;"><div style="width:21px;text-align:center">02</div></div>
<div class="t " style="left:394px;top:225.0px;height:14px;line-height:14px;font-size:11px;color:#222;"><div style="width:21px;text-align:center">03</div></div>
<div class="t " style="left:415px;top:225.0px;height:14px;line-height:14px;font-size:11px;color:#222;"><div style="width:21px;text-align:center">04</div></div>
<div class="t " style="left:436px;top:225.0px;height:14px;line-height:14px;font-size:11px;color:#222;"><div style="width:21px;text-align:center">05</div></div>
<div class="t " style="left:457px;top:225.0px;height:14px;line-height:14px;font-size:11px;color:#222;"><div style="width:21px;text-align:center">06</div></div>
<div class="t " style="left:478px;top:225.0px;height:14px;line-height:14px;font-size:11px;color:#222;"><div style="width:21px;text-align:center">07</div></div>
<div class="t " style="left:499px;top:225.0px;height:14px;line-height:14px;font-size:11px;color:#222;"><div style="width:21px;text-align:center">08</div></div>
<div class="t " style="left:520px;top:225.0px;height:14px;line-height:14px;font-size:11px;color:#222;"><div style="width:21px;text-align:center">09</div></div>
<div class="t " style="left:541px;top:225.0px;height:14px;line-height:14px;font-size:11px;color:#222;"><div style="width:21px;text-align:center">10</div></div>
<div class="t " style="left:562px;top:225.0px;height:14px;line-height:14px;font-size:11px;color:#222;"><div style="width:21px;text-align:center">11</div></div>
<div class="t " style="left:583px;top:225.0px;height:14px;line-height:14px;font-size:11px;color:#222;"><div style="width:21px;text-align:center">12</div></div>
<svg style="left:342px;top:210px" width="9" height="9" viewBox="0 0 9 9"><path d="M4.5 1 l4 7.5 h-8z" fill="#ef4b12"/></svg>
<div class="t " style="left:24px;top:246.0px;height:14px;line-height:14px;font-size:11.3px;font-weight:bold;color:#111;letter-spacing:-0.023px;">Tâches</div>
<div class="t " style="left:105px;top:267.0px;height:14px;line-height:14px;font-size:10.8px;color:#111;letter-spacing:0.020px;">Bulletins</div>
<div class="r" style="left:355px;top:268px;width:16px;height:12px;border-radius:4.5px;background:#88c075;border:1px solid #647f59"></div>
<div class="r" style="left:376px;top:268px;width:16px;height:12px;border-radius:4.5px;background:#a4c8f4;border:1px solid #6a7a92"></div>
<div class="t " style="left:105px;top:288.0px;height:14px;line-height:14px;font-size:10.8px;color:#111;letter-spacing:0.287px;">Virements</div>
<div class="t " style="left:105px;top:309.0px;height:14px;line-height:14px;font-size:10.8px;color:#111;letter-spacing:0.240px;">Déclarations</div>
<div class="r" style="left:355px;top:310px;width:16px;height:12px;border-radius:4.5px;background:#e8a8d8;border:1px solid #8a7a88"></div>
<div class="r" style="left:397px;top:310px;width:16px;height:12px;border-radius:4.5px;background:#f24a4a;border:1px solid #a85454"></div>
<div class="t " style="left:24px;top:330.0px;height:14px;line-height:14px;font-size:11.3px;font-weight:bold;color:#111;letter-spacing:-0.294px;">Salariés</div>
<div class="t " style="left:24px;top:351.0px;height:14px;line-height:14px;font-size:10.8px;color:#111;letter-spacing:-0.206px;">00001</div>
<div class="t " style="left:105px;top:351.0px;height:14px;line-height:14px;font-size:10.8px;color:#111;letter-spacing:-0.373px;">BONNET Marc</div>
<div class="r" style="left:355px;top:352px;width:16px;height:12px;border-radius:4.5px;background:#88c075;border:1px solid #647f59"></div>
<div class="r" style="left:376px;top:352px;width:16px;height:12px;border-radius:4.5px;background:#a4c8f4;border:1px solid #6a7a92"></div>
<div class="t " style="left:24px;top:372.0px;height:14px;line-height:14px;font-size:10.8px;color:#111;letter-spacing:-0.206px;">00002</div>
<div class="t " style="left:105px;top:372.0px;height:14px;line-height:14px;font-size:10.8px;color:#111;letter-spacing:-0.341px;">BUCCI Joël</div>
<div class="r" style="left:355px;top:373px;width:16px;height:12px;border-radius:4.5px;background:#88c075;border:1px solid #647f59"></div>
<div class="r" style="left:376px;top:373px;width:16px;height:12px;border-radius:4.5px;background:#a4c8f4;border:1px solid #6a7a92"></div>
<div class="t " style="left:24px;top:393.0px;height:14px;line-height:14px;font-size:10.8px;color:#111;letter-spacing:-0.206px;">00003</div>
<div class="t " style="left:105px;top:393.0px;height:14px;line-height:14px;font-size:10.8px;color:#111;letter-spacing:-0.357px;">GARAY Cécile né(e) BIDEGAIN</div>
<div class="r" style="left:355px;top:394px;width:16px;height:12px;border-radius:4.5px;background:#88c075;border:1px solid #647f59"></div>
<div class="r" style="left:376px;top:394px;width:16px;height:12px;border-radius:4.5px;background:#a4c8f4;border:1px solid #6a7a92"></div>
<div class="t " style="left:24px;top:414.0px;height:14px;line-height:14px;font-size:10.8px;color:#111;letter-spacing:-0.045px;">00011</div>
<div class="t " style="left:105px;top:414.0px;height:14px;line-height:14px;font-size:10.8px;color:#111;letter-spacing:-0.692px;">GARAY Léa</div>
<div class="r" style="left:355px;top:415px;width:16px;height:12px;border-radius:4.5px;background:#88c075;border:1px solid #647f59"></div>
<div class="r" style="left:376px;top:415px;width:16px;height:12px;border-radius:4.5px;background:#a4c8f4;border:1px solid #6a7a92"></div>
<div class="t " style="left:24px;top:435.0px;height:14px;line-height:14px;font-size:10.8px;color:#111;letter-spacing:-0.206px;">00004</div>
<div class="t " style="left:105px;top:435.0px;height:14px;line-height:14px;font-size:10.8px;color:#111;letter-spacing:-0.403px;">GIRBON Jeanne</div>
<div class="r" style="left:355px;top:436px;width:16px;height:12px;border-radius:4.5px;background:#88c075;border:1px solid #647f59"></div>
<div class="r" style="left:376px;top:436px;width:16px;height:12px;border-radius:4.5px;background:#a4c8f4;border:1px solid #6a7a92"></div>
<div class="t " style="left:24px;top:456.0px;height:14px;line-height:14px;font-size:10.8px;color:#111;letter-spacing:-0.206px;">00010</div>
<div class="t " style="left:105px;top:456.0px;height:14px;line-height:14px;font-size:10.8px;color:#111;letter-spacing:-0.443px;">HARGUINDEGUY Marie né(e) ZAMORA</div>
<div class="r" style="left:355px;top:457px;width:16px;height:12px;border-radius:4.5px;background:#88c075;border:1px solid #647f59"></div>
<div class="r" style="left:376px;top:457px;width:16px;height:12px;border-radius:4.5px;background:#a4c8f4;border:1px solid #6a7a92"></div>
<div class="t " style="left:24px;top:477.0px;height:14px;line-height:14px;font-size:10.8px;font-weight:bold;color:#111;letter-spacing:-0.006px;">00005</div>
<div class="t " style="left:105px;top:477.0px;height:14px;line-height:14px;font-size:10.8px;font-weight:bold;color:#111;letter-spacing:-0.124px;">HORTIS Sergio</div>
<div class="r" style="left:355px;top:478px;width:16px;height:12px;border-radius:4.5px;background:#88c075;border:1px solid #647f59"></div>
<div class="r" style="left:376px;top:478px;width:16px;height:12px;border-radius:4.5px;background:#a4c8f4;border:1px solid #6a7a92"></div>
<div class="t " style="left:24px;top:498.0px;height:14px;line-height:14px;font-size:10.8px;color:#111;letter-spacing:-0.206px;">00006</div>
<div class="t " style="left:105px;top:498.0px;height:14px;line-height:14px;font-size:10.8px;color:#111;letter-spacing:-0.644px;">LASCANO Maia</div>
<div class="r" style="left:355px;top:499px;width:16px;height:12px;border-radius:4.5px;background:#88c075;border:1px solid #647f59"></div>
<div class="r" style="left:376px;top:499px;width:16px;height:12px;border-radius:4.5px;background:#a4c8f4;border:1px solid #6a7a92"></div>
<div class="t " style="left:24px;top:519.0px;height:14px;line-height:14px;font-size:10.8px;color:#111;letter-spacing:-0.206px;">00007</div>
<div class="t " style="left:105px;top:519.0px;height:14px;line-height:14px;font-size:10.8px;color:#111;letter-spacing:-0.052px;">RIVAL Gérard</div>
<div class="r" style="left:355px;top:520px;width:16px;height:12px;border-radius:4.5px;background:#88c075;border:1px solid #647f59"></div>
<div class="r" style="left:376px;top:520px;width:16px;height:12px;border-radius:4.5px;background:#a4c8f4;border:1px solid #6a7a92"></div>
<div class="t " style="left:24px;top:540.0px;height:14px;line-height:14px;font-size:10.8px;color:#111;letter-spacing:-0.206px;">00008</div>
<div class="t " style="left:105px;top:540.0px;height:14px;line-height:14px;font-size:10.8px;color:#111;letter-spacing:-0.184px;">VIDAL Célia</div>
<div class="r" style="left:355px;top:541px;width:16px;height:12px;border-radius:4.5px;background:#88c075;border:1px solid #647f59"></div>
<div class="r" style="left:376px;top:541px;width:16px;height:12px;border-radius:4.5px;background:#a4c8f4;border:1px solid #6a7a92"></div>
<div class="r" style="left:374px;top:474px;width:20px;height:20px;border:1px solid #1e3a4a;background:#d9cccc"></div>
<div class="r" style="left:375px;top:475px;width:18px;height:18px;border:1px dotted #a8d0e6"></div>
<div class="r" style="left:376px;top:478px;width:16px;height:12px;border-radius:4.5px;background:#a4c8f4;border:1px solid #6a7a92"></div>
<svg style="left:2px;top:477px" width="14" height="14" viewBox="0 0 14 14"><circle cx="7" cy="7" r="6" fill="#eef3fa" stroke="#9fb4cc" stroke-width="1"/><path d="M5.5 4.5 l3.5 2.5 l-3.5 2.5z" fill="#3a6aa8"/></svg>
<div class="r" style="left:1700px;top:187px;width:20px;height:783px;background:#f0f0f0"></div>
<div class="r" style="left:1720px;top:187px;width:5px;height:803px;background:#e3e3e3"></div>
<svg style="left:1705px;top:192px" width="10" height="8" viewBox="0 0 10 8"><path d="M5 1 l4.5 6 h-9z" fill="#a0a0a0"/></svg>
<svg style="left:1705px;top:958px" width="10" height="8" viewBox="0 0 10 8"><path d="M5 7 l4.5 -6 h-9z" fill="#a0a0a0"/></svg>
<div class="r" style="left:0px;top:970px;width:1700px;height:20px;background:#f0f0f0"></div>
<div class="r" style="left:1700px;top:970px;width:20px;height:20px;background:#f3f3f3"></div>
<svg style="left:3px;top:975px" width="8" height="10" viewBox="0 0 8 10"><path d="M1 5 l6-4.5 v9z" fill="#a0a0a0"/></svg>
<svg style="left:1688px;top:975px" width="8" height="10" viewBox="0 0 8 10"><path d="M7 5 l-6-4.5 v9z" fill="#a0a0a0"/></svg>
<div class="r" style="left:1725px;top:187px;width:195px;height:803px;background:#fff"></div>
<div class="r" style="left:1731px;top:197px;width:151px;height:21px;background:#f0f0f0;border:1px solid #e2e2e2"></div>
<div class="r" style="left:1885px;top:195px;width:29px;height:26px;background:linear-gradient(#e8e8e8,#cfcfcf);border-right:1px solid #888;border-bottom:1px solid #888"></div>
<svg style="left:1891px;top:200px" width="18" height="18" viewBox="0 0 18 18"><circle cx="8" cy="7.5" r="5.2" fill="none" stroke="#999" stroke-width="1.2"/><path d="M12 11.5 l3.5 3.5" stroke="#999" stroke-width="1.3"/></svg>
<div class="r" style="left:1729px;top:224px;width:189px;height:1px;background:#e8e8e8"></div>
<svg style="left:1728px;top:228px" width="15" height="15" viewBox="0 0 15 15"><path d="M2.5 6 a5 5 0 0 1 9-2 M12.5 9 a5 5 0 0 1 -9 2" fill="none" stroke="#a8a8a8" stroke-width="1.2"/><path d="M11.5 1 v3.5 h-3.5 M3.5 14 v-3.5 h3.5" fill="none" stroke="#a8a8a8" stroke-width="1.1"/></svg>
<div class="t " style="left:1746px;top:228.5px;height:15px;line-height:15px;font-size:12px;color:#bdbdbd;letter-spacing:-0.069px;">Actualiser</div>
<div class="r" style="left:1727px;top:249px;width:24px;height:24px;border-radius:12px;background:#e3ebf3"></div>
<svg style="left:1732px;top:254px" width="14" height="14" viewBox="0 0 14 14"><rect x="1.5" y="2" width="11" height="10.5" rx="1" fill="none" stroke="#54657a" stroke-width="1.1"/><path d="M1.5 5 h11 M4 0.5 v3 M10 0.5 v3" stroke="#54657a" stroke-width="1.1"/><path d="M4 7.5 h1 M6.5 7.5 h1 M9 7.5 h1 M4 10 h1 M6.5 10 h1" stroke="#54657a" stroke-width="1"/></svg>
<div class="t " style="left:1756px;top:253.5px;height:15px;line-height:15px;font-size:12px;color:#777;letter-spacing:-0.052px;">Année :</div>
<div class="r" style="left:1802px;top:250px;width:69px;height:23px;background:#f7f7f7;border:1px solid #e0e0e0;border-radius:2px"></div>
<div class="t " style="left:1806px;top:254.0px;height:15px;line-height:15px;font-size:12px;color:#333;">2026</div>
<svg style="left:1856px;top:257px" width="10" height="8" viewBox="0 0 10 8"><path d="M1 1.5 l4 4 l4-4" fill="none" stroke="#777" stroke-width="1"/></svg>
<svg style="left:1729px;top:278px" width="14" height="14" viewBox="0 0 14 14"><path d="M6 2 l-5 5 l5 5 M11 2 l-5 5 l5 5" fill="none" stroke="#a8a8a8" stroke-width="1.2"/></svg>
<div class="t " style="left:1746px;top:277.5px;height:15px;line-height:15px;font-size:12px;color:#bdbdbd;letter-spacing:-0.001px;">Découvrir N-<u>1</u></div>
<svg style="left:1729px;top:296px" width="14" height="14" viewBox="0 0 14 14"><path d="M2 2 l5 5 l-5 5 M7 2 l5 5 l-5 5" fill="none" stroke="#a8a8a8" stroke-width="1.2"/></svg>
<div class="t " style="left:1746px;top:295.5px;height:15px;line-height:15px;font-size:12px;color:#bdbdbd;letter-spacing:0.078px;">Revenir à la période e<u>n</u> cours</div>
<svg style="left:1728px;top:314px" width="15" height="15" viewBox="0 0 15 15"><circle cx="7.5" cy="7.5" r="6.3" fill="none" stroke="#222" stroke-width="1.2"/><path d="M6 4.5 l4 3 l-4 3z" fill="#222"/></svg>
<div class="t " style="left:1746px;top:313.0px;height:16px;line-height:16px;font-size:13px;font-weight:bold;color:#111;letter-spacing:0.129px;">Tous</div>
<svg style="left:1729px;top:333px" width="14" height="12" viewBox="0 0 14 12"><path d="M1 2 h12 M3 6 h8 M5 10 h4" stroke="#666" stroke-width="1.2"/></svg>
<div class="t " style="left:1746px;top:331.5px;height:15px;line-height:15px;font-size:12px;color:#bdbdbd;letter-spacing:-0.146px;">Filtre et tri...</div>
<div class="r" style="left:1728px;top:348px;width:190px;height:1px;background:#e4e4e4"></div>
<svg style="left:1729px;top:353px" width="14" height="14" viewBox="0 0 14 14"><path d="M6 2 h8 M6 7 h8 M6 12 h8" stroke="#666" stroke-width="1.2"/><circle cx="2" cy="2" r="1.3" fill="none" stroke="#666" stroke-width="0.9"/><circle cx="2" cy="7" r="1.3" fill="none" stroke="#666" stroke-width="0.9"/><circle cx="2" cy="12" r="1.3" fill="none" stroke="#666" stroke-width="0.9"/></svg>
<div class="t " style="left:1746px;top:352.5px;height:15px;line-height:15px;font-size:12px;color:#bdbdbd;letter-spacing:0.184px;">Légende</div>
<div class="r" style="left:1727px;top:369px;width:191px;height:23px;background:#e8ecf0"></div>
<div class="t " style="left:1731px;top:373.8px;height:16px;line-height:16px;font-size:13.2px;font-weight:bold;color:#34495a;letter-spacing:0.097px;">Données groupe</div>
<div class="t " style="left:1746px;top:393.5px;height:15px;line-height:15px;font-size:12px;color:#bdbdbd;letter-spacing:-0.763px;"><span style="text-decoration:underline;text-decoration-color:#e0e0e0">ZZZ</span></div>
<svg style="left:1728px;top:393px" width="15" height="15" viewBox="0 0 15 15"><circle cx="7.5" cy="5" r="2.5" fill="none" stroke="#555" stroke-width="1"/><path d="M2.5 13 a5 5 0 0 1 10 0" fill="none" stroke="#555" stroke-width="1"/><circle cx="3" cy="6" r="1.6" fill="none" stroke="#555" stroke-width="0.8"/><circle cx="12" cy="6" r="1.6" fill="none" stroke="#555" stroke-width="0.8"/></svg>
<div class="r" style="left:1727px;top:412px;width:191px;height:23px;background:#e8ecf0"></div>
<div class="t " style="left:1731px;top:416.8px;height:16px;line-height:16px;font-size:13.2px;font-weight:bold;color:#34495a;letter-spacing:0.070px;">Gestion des entrées</div>
<div class="t " style="left:1746px;top:437.2px;height:15px;line-height:15px;font-size:12px;color:#bdbdbd;letter-spacing:0.073px;">Suivi des parcours d'entrée</div>
<svg style="left:1728px;top:436.7px" width="15" height="15" viewBox="0 0 15 15"><ellipse cx="7" cy="8" rx="6.3" ry="4" fill="none" stroke="#a8a8a8" stroke-width="1.1"/><circle cx="7" cy="8" r="2" fill="none" stroke="#a8a8a8" stroke-width="1.1"/><circle cx="12.5" cy="3" r="1.8" fill="#a8a8a8"/></svg>
<div class="t " style="left:1746px;top:455.2px;height:15px;line-height:15px;font-size:12px;color:#bdbdbd;letter-spacing:-0.022px;">Saisir une DPAE URSSAF</div>
<svg style="left:1728px;top:454.7px" width="15" height="15" viewBox="0 0 15 15"><circle cx="7.5" cy="7.5" r="6.3" fill="none" stroke="#a8a8a8" stroke-width="1.1"/><path d="M4 7.5 h7 M7.5 4 v7" stroke="#a8a8a8" stroke-width="1.1"/></svg>
<div class="t " style="left:1746px;top:473.5px;height:15px;line-height:15px;font-size:12px;color:#bdbdbd;letter-spacing:0.079px;">DPAE en préparation</div>
<svg style="left:1728px;top:473px" width="15" height="15" viewBox="0 0 15 15"><rect x="1" y="3" width="13" height="9.5" fill="none" stroke="#a8a8a8" stroke-width="1.1"/><path d="M1 3 l6.5 5.5 l6.5-5.5 M1 12.5 l5-4.5 M14 12.5 l-5-4.5" fill="none" stroke="#a8a8a8" stroke-width="1"/></svg>
<div class="t " style="left:1746px;top:491.5px;height:15px;line-height:15px;font-size:12px;color:#bdbdbd;letter-spacing:-0.079px;">Suivi des DPAE</div>
<svg style="left:1728px;top:491px" width="15" height="15" viewBox="0 0 15 15"><rect x="2.5" y="2.5" width="10" height="11.5" rx="1" fill="none" stroke="#a8a8a8" stroke-width="1.1"/><rect x="5" y="1" width="5" height="2.5" fill="#fff" stroke="#a8a8a8" stroke-width="1"/><path d="M5 7 h5 M5 9.5 h5" stroke="#a8a8a8" stroke-width="1"/></svg>
<div class="r" style="left:1727px;top:515px;width:191px;height:23px;background:#e8ecf0"></div>
<div class="t " style="left:1731px;top:519.8px;height:16px;line-height:16px;font-size:13.2px;font-weight:bold;color:#34495a;letter-spacing:0.016px;">Gestion des sorties</div>
<div class="t " style="left:1746px;top:540.5px;height:15px;line-height:15px;font-size:12px;color:#bdbdbd;letter-spacing:0.159px;">Demandes de sorties</div>
<svg style="left:1728px;top:540px" width="15" height="15" viewBox="0 0 15 15"><path d="M1.5 1.5 h12 v9 h-9 l-3 3z" fill="none" stroke="#a8a8a8" stroke-width="1.1" stroke-linejoin="round"/><path d="M4 5 h7 M4 7.5 h5" stroke="#a8a8a8" stroke-width="1"/></svg>
<div class="t " style="left:1746px;top:558.5px;height:15px;line-height:15px;font-size:12px;color:#bdbdbd;letter-spacing:-0.080px;">Suivi des AER</div>
<svg style="left:1728px;top:558px" width="15" height="15" viewBox="0 0 15 15"><rect x="2.5" y="2.5" width="10" height="11.5" rx="1" fill="none" stroke="#a8a8a8" stroke-width="1.1"/><rect x="5" y="1" width="5" height="2.5" fill="#fff" stroke="#a8a8a8" stroke-width="1"/><path d="M5 7 h5 M5 9.5 h5" stroke="#a8a8a8" stroke-width="1"/></svg>
<div class="r" style="left:1727px;top:578px;width:191px;height:23px;background:#e8ecf0"></div>
<div class="t " style="left:1731px;top:582.8px;height:16px;line-height:16px;font-size:13.2px;font-weight:bold;color:#34495a;letter-spacing:-0.133px;">Contrôles</div>
<div class="t " style="left:1746px;top:603.2px;height:15px;line-height:15px;font-size:12px;color:#bdbdbd;letter-spacing:-0.002px;">Suivi des CRM NEOReS</div>
<svg style="left:1728px;top:602.7px" width="15" height="15" viewBox="0 0 15 15"><rect x="2.5" y="2.5" width="10" height="11.5" rx="1" fill="none" stroke="#a8a8a8" stroke-width="1.1"/><rect x="5" y="1" width="5" height="2.5" fill="#fff" stroke="#a8a8a8" stroke-width="1"/><path d="M5 7 h5 M5 9.5 h5" stroke="#a8a8a8" stroke-width="1"/></svg>
<div class="r" style="left:1727px;top:621px;width:191px;height:23px;background:#e8ecf0"></div>
<div class="t " style="left:1731px;top:625.8px;height:16px;line-height:16px;font-size:13.2px;font-weight:bold;color:#34495a;letter-spacing:-0.068px;">Coffre-fort</div>
<div class="t " style="left:1746px;top:646.3px;height:15px;line-height:15px;font-size:12px;color:#bdbdbd;letter-spacing:-0.003px;">Suivi des dépôts</div>
<svg style="left:1728px;top:645.8px" width="15" height="15" viewBox="0 0 15 15"><rect x="2.5" y="2.5" width="10" height="11.5" rx="1" fill="none" stroke="#a8a8a8" stroke-width="1.1"/><rect x="5" y="1" width="5" height="2.5" fill="#fff" stroke="#a8a8a8" stroke-width="1"/><path d="M5 7 h5 M5 9.5 h5" stroke="#a8a8a8" stroke-width="1"/></svg>
<div class="t " style="left:1746px;top:664.3px;height:15px;line-height:15px;font-size:12px;color:#bdbdbd;letter-spacing:0.047px;">Naviguer vers la plateforme</div>
<svg style="left:1728px;top:663.8px" width="15" height="15" viewBox="0 0 15 15"><circle cx="7.5" cy="7.5" r="6.3" fill="none" stroke="#a8a8a8" stroke-width="1.1"/><path d="M6 4.5 l4 3 l-4 3z" fill="#a8a8a8"/></svg>
<div class="r" style="left:1727px;top:685px;width:191px;height:23px;background:#e8ecf0"></div>
<div class="t " style="left:1731px;top:689.8px;height:16px;line-height:16px;font-size:13.2px;font-weight:bold;color:#34495a;letter-spacing:0.206px;">Relation client</div>
<div class="t " style="left:1746px;top:709.5px;height:15px;line-height:15px;font-size:12px;color:#bdbdbd;letter-spacing:0.128px;">Historique des BP soumis à</div>
<svg style="left:1728px;top:709px" width="15" height="15" viewBox="0 0 15 15"><circle cx="6" cy="6" r="5" fill="none" stroke="#a8a8a8" stroke-width="1.1"/><path d="M6 3 v3 h2.5" fill="none" stroke="#a8a8a8" stroke-width="1"/><path d="M10 11 h4 l-1.5-1.5 M14 13.5 h-4 l1.5 1.5" fill="none" stroke="#a8a8a8" stroke-width="0.9"/></svg>
<div class="t " style="left:1746px;top:724.5px;height:15px;line-height:15px;font-size:12px;color:#bdbdbd;letter-spacing:0.060px;">validation</div>
<div class="t " style="left:1746px;top:741.3px;height:15px;line-height:15px;font-size:12px;color:#bdbdbd;letter-spacing:-0.024px;">Synthèse société</div>
<svg style="left:1728px;top:740.8px" width="15" height="15" viewBox="0 0 15 15"><rect x="1.5" y="1.5" width="12" height="12" fill="none" stroke="#a8a8a8" stroke-width="1.1"/><path d="M1.5 4.5 h12" stroke="#a8a8a8" stroke-width="1"/><rect x="3.5" y="7" width="3.5" height="4" fill="none" stroke="#a8a8a8" stroke-width="0.9"/><path d="M8.5 8 h3.5 M8.5 10.5 h3.5" stroke="#a8a8a8" stroke-width="0.9"/></svg>
<div class="r" style="left:1727px;top:762px;width:191px;height:23px;background:#e8ecf0"></div>
<div class="t " style="left:1731px;top:766.8px;height:16px;line-height:16px;font-size:13.2px;font-weight:bold;color:#34495a;letter-spacing:0.102px;">Notifications et mails</div>
<div class="t " style="left:1746px;top:786.1px;height:15px;line-height:15px;font-size:12px;color:#bdbdbd;letter-spacing:0.018px;">Centre de notifications</div>
<svg style="left:1728px;top:785.6px" width="15" height="15" viewBox="0 0 15 15"><path d="M3 11 q1.5-1.5 1.5-5 q0-4 3-4 q3 0 3 4 q0 3.5 1.5 5z" fill="none" stroke="#a8a8a8" stroke-width="1.1"/><path d="M1 2 l2 2 M14 2 l-2 2" stroke="#a8a8a8" stroke-width="1"/><path d="M6 12.5 a1.5 1.5 0 0 0 3 0" fill="none" stroke="#a8a8a8" stroke-width="1"/></svg>
<div class="t " style="left:1746px;top:804.5px;height:15px;line-height:15px;font-size:12px;color:#bdbdbd;letter-spacing:0.070px;">Alertes d'échéances sur</div>
<svg style="left:1728px;top:804px" width="15" height="15" viewBox="0 0 15 15"><circle cx="7.5" cy="8.5" r="5.8" fill="none" stroke="#a8a8a8" stroke-width="1.1"/><path d="M6 1 h3 M7.5 8.5 l2-2.5" stroke="#a8a8a8" stroke-width="1.1"/></svg>
<div class="t " style="left:1746px;top:819.5px;height:15px;line-height:15px;font-size:12px;color:#bdbdbd;letter-spacing:0.057px;">salariés</div>
<div class="t " style="left:1746px;top:836.5px;height:15px;line-height:15px;font-size:12px;color:#bdbdbd;letter-spacing:-0.025px;"><u>M</u>ails envoyés</div>
<svg style="left:1728px;top:836px" width="15" height="15" viewBox="0 0 15 15"><rect x="1" y="3" width="13" height="9.5" fill="none" stroke="#a8a8a8" stroke-width="1.1"/><path d="M1 3 l6.5 5.5 l6.5-5.5 M1 12.5 l5-4.5 M14 12.5 l-5-4.5" fill="none" stroke="#a8a8a8" stroke-width="1"/></svg>
<svg style="left:1719px;top:552px" width="6" height="10" viewBox="0 0 6 10"><path d="M1.5 1.5 l3.5 3.5 l-3.5 3.5z" fill="#fff" stroke="#2a2a8a" stroke-width="1"/></svg>
<svg style="left:1719px;top:615px" width="6" height="10" viewBox="0 0 6 10"><path d="M1.5 1.5 l3.5 3.5 l-3.5 3.5z" fill="#fff" stroke="#2a2a8a" stroke-width="1"/></svg>
<div class="r" style="left:1722px;top:568px;width:1px;height:44px;border-left:1px dotted #3a3aa0"></div>
<div class="r" style="left:545px;top:256px;width:829px;height:641px;background:#fff;border:1px solid #6e6e6e;border-top:none"></div>
<div class="r" style="left:545px;top:256px;width:829px;height:26px;background:#2d637a"></div>
<div class="t " style="left:837.6px;top:259.5px;height:18px;line-height:18px;font-size:13.5px;font-weight:bold;color:#fff;letter-spacing:0.185px;">Légende de l’état d’avancement</div>
<div class="r" style="left:1342px;top:257px;width:31px;height:23px;background:#fdfdfd;border-radius:4px"></div>
<div class="t " style="left:1352px;top:260.5px;height:16px;line-height:16px;font-size:13px;font-weight:bold;color:#111;">X</div>
<div class="t " style="left:574px;top:306.5px;height:22px;line-height:22px;font-size:18.4px;font-weight:bold;color:#111;letter-spacing:-0.021px;">Bulletins</div>
<div class="r" style="left:574px;top:332px;width:380px;height:284px;background:#fcfcfc;border:1px solid #6e6e6e"></div>
<div class="r" style="left:970px;top:332px;width:380px;height:284px;background:#fcfcfc;border:1px solid #6e6e6e"></div>
<div class="t " style="left:586px;top:340.5px;height:18px;line-height:18px;font-size:14px;font-weight:bold;color:#111;letter-spacing:-0.034px;">Couleurs</div>
<div class="r" style="left:585px;top:370px;width:16px;height:12px;border-radius:4.5px;background:#f24a4a;border:1px solid #a85454"></div>
<div class="t " style="left:609px;top:369.5px;height:15px;line-height:15px;font-size:11px;color:#0a0a0a;letter-spacing:-0.155px;">Saisie des traitements</div>
<div class="r" style="left:585px;top:399px;width:16px;height:12px;border-radius:4.5px;background:#d8eba2;border:1px solid #8f9a78"></div>
<div class="t " style="left:609px;top:398.5px;height:15px;line-height:15px;font-size:11px;color:#0a0a0a;letter-spacing:-0.206px;">Bulletins en montage</div>
<div class="r" style="left:585px;top:428px;width:16px;height:12px;border-radius:4.5px;background:#fed47a;border:1px solid #a8925e"></div>
<div class="t " style="left:609px;top:427.5px;height:15px;line-height:15px;font-size:11px;color:#0a0a0a;letter-spacing:-0.086px;">Bulletins calculés, en attente de confirmation</div>
<div class="r" style="left:585px;top:457px;width:16px;height:12px;border-radius:4.5px;background:#a4c8f4;border:1px solid #6a7a92"></div>
<div class="t " style="left:609px;top:456.5px;height:15px;line-height:15px;font-size:11px;color:#0a0a0a;letter-spacing:-0.044px;">Bulletins contrôlés, en attente de l’édition</div>
<div class="r" style="left:585px;top:486px;width:16px;height:12px;border-radius:4.5px;background:#88c075;border:1px solid #647f59"></div>
<div class="t " style="left:609px;top:485.5px;height:15px;line-height:15px;font-size:11px;color:#0a0a0a;letter-spacing:-0.116px;">Bulletins originaux édités / cycle de paie terminé</div>
<div class="r" style="left:585px;top:515px;width:16px;height:12px;border-radius:4.5px;background:#ffffff;border:1px solid #6a6a6a"></div>
<div class="t " style="left:609px;top:514.5px;height:15px;line-height:15px;font-size:11px;color:#0a0a0a;letter-spacing:-0.088px;">Bulletins fait sur une période postérieure à la période en cours</div>
<div class="t " style="left:982px;top:340.5px;height:18px;line-height:18px;font-size:14px;font-weight:bold;color:#111;letter-spacing:-0.142px;">Symboles</div>
<svg style="left:981px;top:369px" width="18" height="16" viewBox="0 0 18 16"><rect x="0.7" y="1.5" width="15" height="11.2" rx="4" fill="#fff" stroke="#6a6a6a" stroke-width="1"/><path d="M4.7 7.1 h7 M8.2 3.6 v7" stroke="#c03a3a" stroke-width="1"/></svg>
<div class="t " style="left:1005px;top:369.5px;height:15px;line-height:15px;font-size:11px;color:#0a0a0a;letter-spacing:-0.279px;">Plusieurs bulletins calculés sur un même salarié et le même mois</div>
<div class="t " style="left:982px;top:393.5px;height:16px;line-height:16px;font-size:12px;font-weight:bold;color:#111;letter-spacing:-0.127px;">Partages et validations des bulletins brouillons</div>
<svg style="left:979px;top:416px" width="18" height="16" viewBox="0 0 18 16"><rect x="2" y="4.3" width="15" height="11.4" rx="4" fill="#fff" stroke="#6a6a6a" stroke-width="1"/><circle cx="4" cy="4" r="3.6" fill="#a24fd0"/></svg>
<div class="t " style="left:1005px;top:419.5px;height:15px;line-height:15px;font-size:11px;color:#0a0a0a;letter-spacing:-0.126px;">Bulletins brouillons transmis - En attente de validation</div>
<svg style="left:979px;top:445px" width="18" height="16" viewBox="0 0 18 16"><rect x="2" y="4.3" width="15" height="11.4" rx="4" fill="#fff" stroke="#6a6a6a" stroke-width="1"/><circle cx="4" cy="4" r="3.6" fill="#e8705a"/></svg>
<div class="t " style="left:1005px;top:448.5px;height:15px;line-height:15px;font-size:11px;color:#0a0a0a;letter-spacing:-0.194px;">Bulletins brouillons refusés</div>
<svg style="left:979px;top:474px" width="18" height="16" viewBox="0 0 18 16"><rect x="2" y="4.3" width="15" height="11.4" rx="4" fill="#fff" stroke="#6a6a6a" stroke-width="1"/><circle cx="4" cy="4" r="3.6" fill="#3a9a3f"/><path d="M2 3.5 l1 1 l1.8-1.8" fill="none" stroke="#fff" stroke-width="0.8"/></svg>
<div class="t " style="left:1005px;top:477.5px;height:15px;line-height:15px;font-size:11px;color:#0a0a0a;letter-spacing:-0.232px;">Bulletins brouillons validés</div>
<div class="t " style="left:982px;top:501.5px;height:16px;line-height:16px;font-size:12px;font-weight:bold;color:#111;letter-spacing:-0.036px;">Salariés sortants / Déclarations Fin de Contrat de Travail</div>
<svg style="left:979.5px;top:524px" width="18" height="16" viewBox="0 0 18 16"><rect x="2" y="4.3" width="15" height="11.4" rx="4" fill="#fff" stroke="#6a6a6a" stroke-width="1"/><circle cx="13.3" cy="8.3" r="1.8" fill="#b0243a"/></svg>
<div class="t " style="left:1005px;top:527.5px;height:15px;line-height:15px;font-size:11px;color:#0a0a0a;letter-spacing:-0.083px;">Sorties du salarié à traiter</div>
<svg style="left:979.5px;top:553px" width="18" height="16" viewBox="0 0 18 16"><rect x="2" y="4.3" width="15" height="11.4" rx="4" fill="#fff" stroke="#6a6a6a" stroke-width="1"/><circle cx="13.3" cy="8.3" r="1.8" fill="#e8a13a"/></svg>
<div class="t " style="left:1005px;top:556.5px;height:15px;line-height:15px;font-size:11px;color:#0a0a0a;letter-spacing:-0.128px;">Déclarations de sortie transmises - En attente AER</div>
<svg style="left:979.5px;top:582px" width="18" height="16" viewBox="0 0 18 16"><rect x="2" y="4.3" width="15" height="11.4" rx="4" fill="#fff" stroke="#6a6a6a" stroke-width="1"/><circle cx="13.3" cy="8.3" r="1.8" fill="#1f5e1f"/></svg>
<div class="t " style="left:1005px;top:585.5px;height:15px;line-height:15px;font-size:11px;color:#0a0a0a;letter-spacing:-0.105px;">Déclarations de sortie acceptées - Attestation AER disponible</div>
<div class="t " style="left:574px;top:644.5px;height:22px;line-height:22px;font-size:19px;font-weight:bold;color:#111;letter-spacing:-0.000px;">Déclaration Sociale Nominative (DSN)</div>
<div class="r" style="left:574px;top:672px;width:776px;height:156px;background:#fcfcfc;border:1px solid #6e6e6e"></div>
<div class="t " style="left:586px;top:680.5px;height:18px;line-height:18px;font-size:14px;font-weight:bold;color:#111;letter-spacing:0.041px;">Couleurs</div>
<div class="r" style="left:585px;top:710px;width:16px;height:12px;border-radius:4.5px;background:#f24a4a;border:1px solid #a85454"></div>
<div class="t " style="left:609px;top:709.5px;height:15px;line-height:15px;font-size:11px;color:#0a0a0a;letter-spacing:-0.030px;">Aucune déclaration faite ou refusée</div>
<div class="r" style="left:585px;top:739px;width:16px;height:12px;border-radius:4.5px;background:#e8a8d8;border:1px solid #8a7a88"></div>
<div class="t " style="left:609px;top:738.5px;height:15px;line-height:15px;font-size:11px;color:#0a0a0a;letter-spacing:-0.184px;">Ensemble des déclarations calculées, mais au moins une déclaration non envoyée</div>
<div class="r" style="left:585px;top:768px;width:16px;height:12px;border-radius:4.5px;background:#fed47a;border:1px solid #a8925e"></div>
<div class="t " style="left:609px;top:767.5px;height:15px;line-height:15px;font-size:11px;color:#0a0a0a;letter-spacing:0.033px;">Déclarations envoyées, en attente de retour</div>
<div class="r" style="left:585px;top:797px;width:16px;height:12px;border-radius:4.5px;background:#88c075;border:1px solid #647f59"></div>
<div class="t " style="left:609px;top:796.5px;height:15px;line-height:15px;font-size:11px;color:#0a0a0a;letter-spacing:-0.147px;">Déclarations acceptées</div>
<div class="r" style="left:1257px;top:851px;width:92px;height:27px;background:#fcfcfe;border:1px solid #2b78b0;border-radius:4px"></div>
<div class="t " style="left:1283.6px;top:858.0px;height:15px;line-height:15px;font-size:11.3px;color:#111;letter-spacing:-0.318px;">Fermer</div>
<div class="r" style="left:0px;top:990px;width:1725px;height:22px;background:#f7f7f7"></div>
<div class="r" style="left:1725px;top:990px;width:195px;height:22px;background:#f7f7f7"></div>
<div class="r" style="left:3px;top:992px;width:115px;height:18px;background:#dde1e8"></div>
<div class="t " style="left:8px;top:994.0px;height:15px;line-height:15px;font-size:11.8px;color:#222;letter-spacing:0.391px;">Etat d'avancement</div>
<div class="r" style="left:0px;top:1012px;width:1920px;height:20px;background:#fff"></div>
<div class="t " style="left:1706px;top:1015.0px;height:14px;line-height:14px;font-size:10.7px;color:#111;">Version 1.2028.16 - BC 1121 du 04/03/2026</div>
</body></html>
